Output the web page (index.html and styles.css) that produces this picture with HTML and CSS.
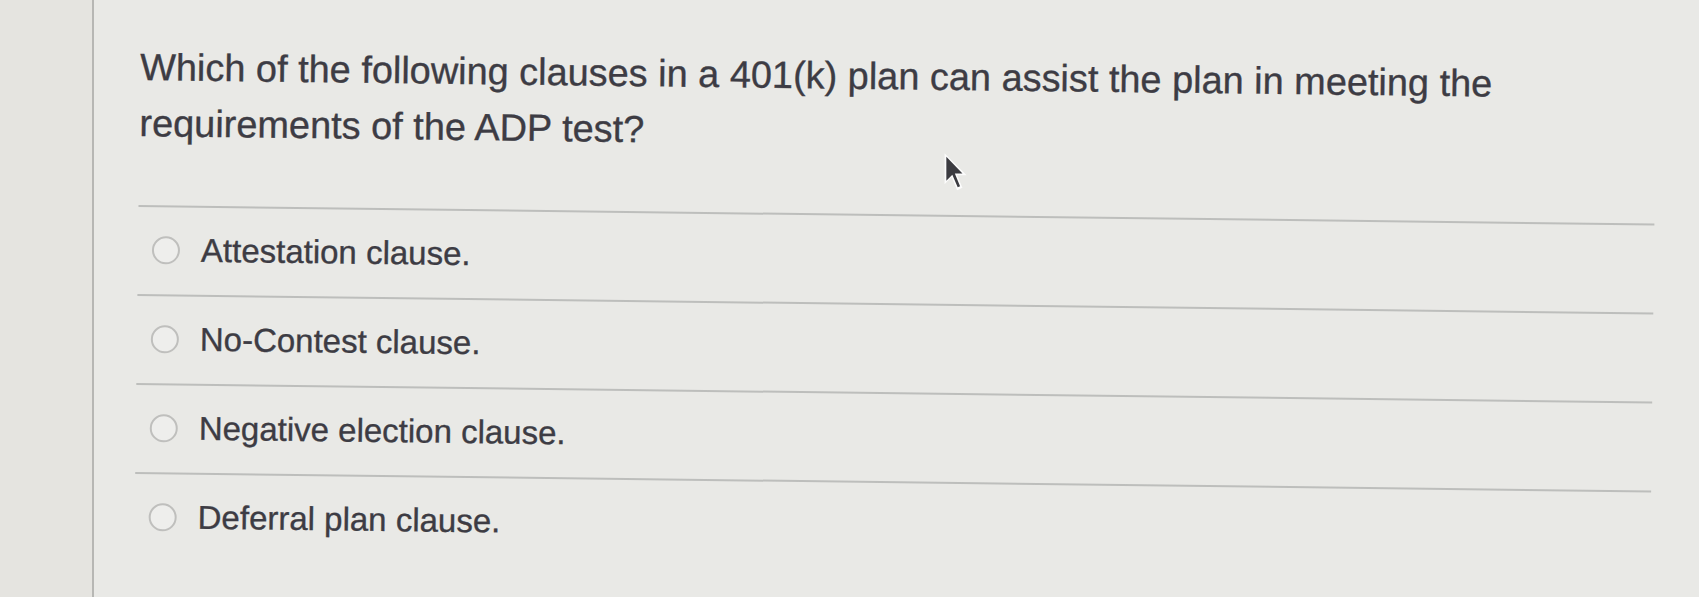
FILE: index.html
```html
<!DOCTYPE html>
<html lang="en">
<head>
<meta charset="utf-8">
<title>Question</title>
<link rel="stylesheet" href="styles.css">
</head>
<body>
<div class="page">
  <aside class="sidebar"></aside>
  <main class="main">
    <div class="content">
      <p class="question">Which of the following clauses in a 401(k) plan can assist the plan in meeting the requirements of the ADP test?</p>
      <ul class="options">
        <li class="option"><span class="radio"></span><span class="label">Attestation clause.</span></li>
        <li class="option"><span class="radio"></span><span class="label">No-Contest clause.</span></li>
        <li class="option"><span class="radio"></span><span class="label">Negative election clause.</span></li>
        <li class="option"><span class="radio"></span><span class="label">Deferral plan clause.</span></li>
      </ul>
    </div>
    <svg class="cursor" width="29" height="43" viewBox="0 0 24 36" aria-hidden="true">
      <path d="M2 1 L2 27 L8 21 L12.5 32 L17 30 L12.5 19.5 L20.5 19.5 Z" fill="#ffffff" opacity="0.85"/>
      <path d="M3.5 4 L3.5 24 L8.5 19 L13 29.5 L15 28.6 L10.6 18 L17 18 Z" fill="#3b3b40"/>
    </svg>
  </main>
</div>
</body>
</html>
```
FILE: styles.css
```css
html, body {
  margin: 0;
  padding: 0;
  height: 100%;
}

body {
  background: #e8e8e5;
  font-family: "Liberation Sans", Arial, Helvetica, sans-serif;
  color: #3d3c44;
  overflow: hidden;
}

.page {
  display: flex;
  height: 597px;
}

.sidebar {
  width: 92px;
  flex: 0 0 92px;
  background: #e5e4e0;
  border-right: 2px solid #b7b7b4;
}

.main {
  position: relative;
  flex: 1;
  padding-left: 47px;
  background: #e9e9e6;
}

.content {
  width: 1516px;
  transform: rotate(0.7deg);
  transform-origin: 0 0;
}

.question {
  margin: 0;
  padding-top: 39px;
  max-width: 1450px;
  font-size: 37.9px;
  line-height: 56px;
  -webkit-text-stroke: 0.35px #3d3c44;
}

.options {
  list-style: none;
  margin: 54px 0 0;
  padding: 0;
}

.option {
  box-sizing: border-box;
  height: 89px;
  display: flex;
  align-items: center;
  border-top: 2px solid #bdbebc;
  padding-left: 14px;
  padding-bottom: 2px;
}

.radio {
  box-sizing: border-box;
  width: 28px;
  height: 28px;
  border-radius: 50%;
  border: 2px solid #bfbfbd;
  background: #eeeeec;
  margin-right: 21px;
  flex: 0 0 28px;
}

.label {
  font-size: 33px;
  line-height: 40px;
  -webkit-text-stroke: 0.35px #3d3c44;
}

.cursor {
  position: absolute;
  left: 848px;
  top: 152px;
}
```
